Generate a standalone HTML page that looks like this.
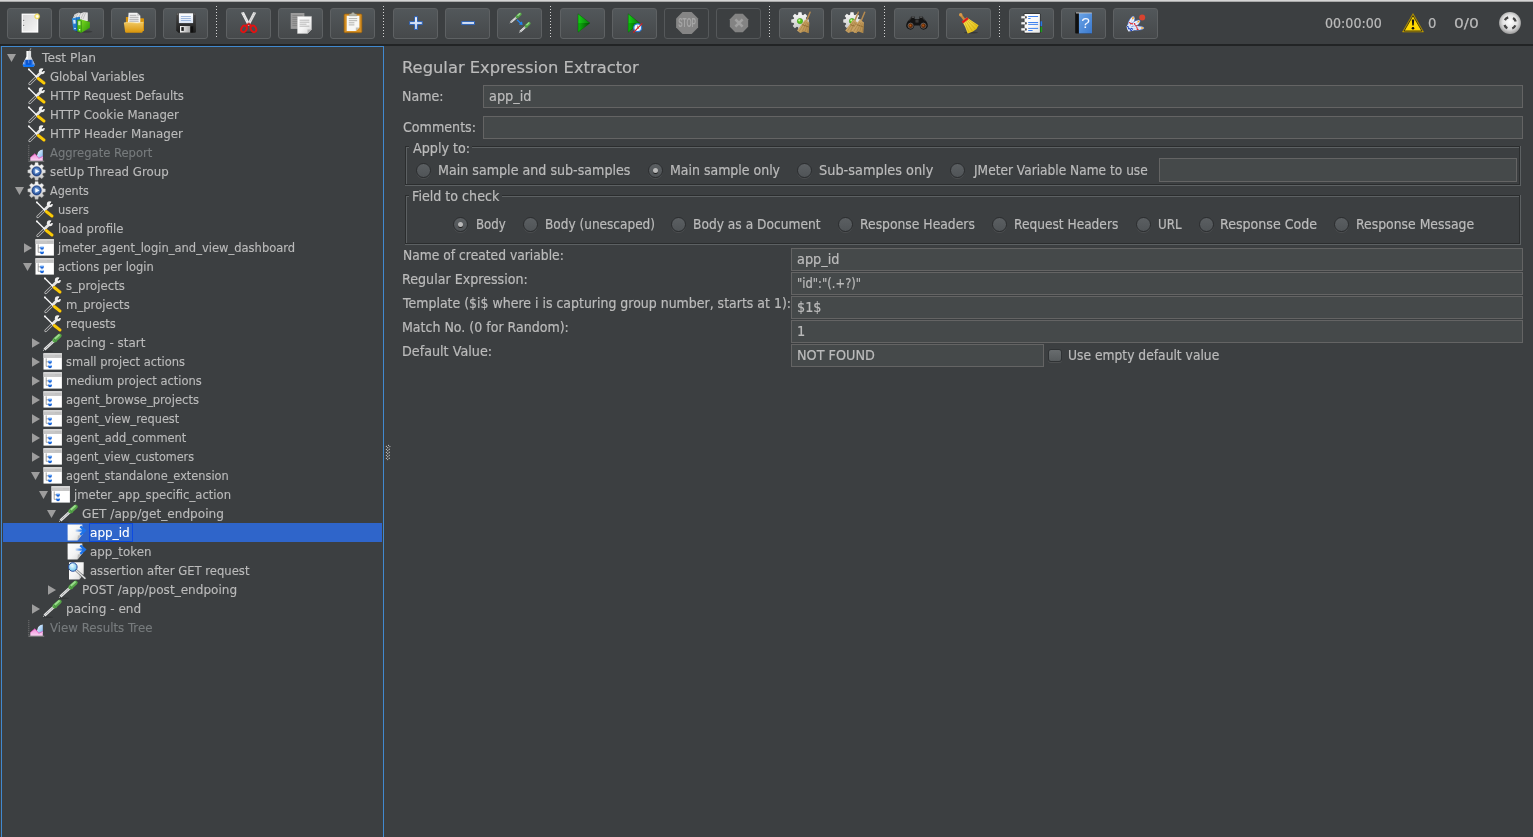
<!DOCTYPE html>
<html lang="en"><head><meta charset="utf-8"><title>Apache JMeter</title>
<style>
html,body{margin:0;padding:0;background:#3c3f41;overflow:hidden}
body{width:1533px;height:837px;position:relative;font-family:"DejaVu Sans","Liberation Sans",sans-serif;font-size:13.5px;color:#bbbbbb}
.a{position:absolute}
.t{-webkit-text-stroke:.2px;position:absolute;white-space:nowrap;line-height:16px;height:16px;transform-origin:0 50%;color:#bbbbbb}
.dis{color:#777b7d}
.sel{color:#ffffff}
.h{font-size:16.7px;line-height:20px;height:20px}
.tr{font-size:12.5px;-webkit-text-stroke:.14px}
.btn{position:absolute;top:8px;width:45px;height:31px;box-sizing:border-box;border:1px solid #5e6163;border-radius:3px;background:linear-gradient(#52575a,#46494b)}
.btn.off{background:#3c3f41;border-color:#55585a}
.btn svg{position:absolute;left:11px;top:3px;will-change:transform}
.sep{position:absolute;top:6px;width:1px;height:31px;background:repeating-linear-gradient(#d4d4d4 0,#d4d4d4 1px,transparent 1px,transparent 3px)}
.f{position:absolute;box-sizing:border-box;height:23px;background:#45494a;border:1px solid #646464}
.rb{position:absolute;width:15px;height:15px;box-sizing:border-box;border-radius:50%;background:linear-gradient(#5b5f62,#505457);border:1px solid #2b2d2f;box-shadow:0 1px 0 rgba(130,130,130,.22)}
.rb.on::after{content:"";position:absolute;left:4px;top:4px;width:5px;height:5px;border-radius:50%;background:#b9b9b9;box-shadow:0 1px 0 #1e1e1e}
.gb{position:absolute;box-sizing:border-box;border:1px solid #2b2d2e}
.gb::after{content:"";position:absolute;left:0;top:0;right:0;bottom:0;border-left:1px solid #5d6163;border-top:1px solid #5d6163}
.gb::before{content:"";position:absolute;left:-1px;top:-1px;right:-2px;bottom:-2px;border-right:1px solid #5d6163;border-bottom:1px solid #5d6163}
.gl{position:absolute;background:#3c3f41;height:14px}
svg{display:block;overflow:visible}
</style></head><body>

<svg width="0" height="0" style="position:absolute"><defs>
<linearGradient id="gPage" x1="0" y1="0" x2="1" y2="1"><stop offset="0" stop-color="#ffffff"/><stop offset=".55" stop-color="#f4f4f4"/><stop offset="1" stop-color="#d4d4d4"/></linearGradient>
<linearGradient id="gGear" x1="0" y1="0" x2="0" y2="1"><stop offset="0" stop-color="#fafafa"/><stop offset="1" stop-color="#c6c6c6"/></linearGradient>
<radialGradient id="gBlueBall" cx=".5" cy=".45" r=".55"><stop offset="0" stop-color="#a2c6ee"/><stop offset=".55" stop-color="#4a78bc"/><stop offset="1" stop-color="#173a80"/></radialGradient>
<linearGradient id="gLiquid" x1="0" y1="0" x2="0" y2="1"><stop offset="0" stop-color="#5aa2f2"/><stop offset=".45" stop-color="#1668e4"/><stop offset="1" stop-color="#0a4cc8"/></linearGradient>
<linearGradient id="gGlass" x1="0" y1="0" x2="1" y2="0"><stop offset="0" stop-color="#d4d7da"/><stop offset=".35" stop-color="#ffffff"/><stop offset=".55" stop-color="#e2e4e6"/><stop offset="1" stop-color="#c4c7ca"/></linearGradient>
<linearGradient id="gLiqH" x1="0" y1="0" x2="1" y2="0"><stop offset="0" stop-color="#b4ccf6"/><stop offset=".3" stop-color="#0c56d0"/><stop offset=".7" stop-color="#0c56d0"/><stop offset="1" stop-color="#a8c4f4"/></linearGradient>
<linearGradient id="gTail" x1="0" y1="0" x2="1" y2="0"><stop offset="0" stop-color="#1c72ea" stop-opacity=".12"/><stop offset=".6" stop-color="#1c72ea" stop-opacity=".85"/><stop offset="1" stop-color="#1c72ea"/></linearGradient>
<radialGradient id="gLens" cx=".45" cy=".4" r=".6"><stop offset="0" stop-color="#e8fbff"/><stop offset="1" stop-color="#6cc4ee"/></radialGradient>
<linearGradient id="gSky" x1="0" y1="0" x2="1" y2="1"><stop offset="0" stop-color="#f4faff"/><stop offset="1" stop-color="#7db6f0"/></linearGradient>
<linearGradient id="gPink" x1="0" y1="0" x2="0" y2="1"><stop offset="0" stop-color="#f08cd8"/><stop offset="1" stop-color="#fbd2f4"/></linearGradient>
<linearGradient id="gNode" x1="0" y1="0" x2="0" y2="1"><stop offset="0" stop-color="#8fc4ff"/><stop offset=".5" stop-color="#1f70e4"/><stop offset="1" stop-color="#0d4fc0"/></linearGradient>
<linearGradient id="gBtn" x1="0" y1="0" x2="0" y2="1"><stop offset="0" stop-color="#52575a"/><stop offset="1" stop-color="#45494b"/></linearGradient>
<linearGradient id="gGreenTri" x1="0" y1="0" x2="1" y2="0"><stop offset="0" stop-color="#16d016"/><stop offset="1" stop-color="#0a7a0a"/></linearGradient>
<linearGradient id="gGreenTriD" x1="0" y1="0" x2="1" y2="0"><stop offset="0" stop-color="#0cb80c"/><stop offset="1" stop-color="#064806"/></linearGradient>
<linearGradient id="gFolder" x1="0" y1="0" x2="0" y2="1"><stop offset="0" stop-color="#f0c862"/><stop offset="1" stop-color="#d99408"/></linearGradient>
<linearGradient id="gFloppy" x1="0" y1="0" x2="0" y2="1"><stop offset="0" stop-color="#4a4a4a"/><stop offset="1" stop-color="#1c1c1c"/></linearGradient>
<linearGradient id="gLabel" x1="0" y1="0" x2="0" y2="1"><stop offset="0" stop-color="#ffffff"/><stop offset="1" stop-color="#dbe6f6"/></linearGradient>
<linearGradient id="gMetal" x1="0" y1="0" x2="1" y2="0"><stop offset="0" stop-color="#f4f4f4"/><stop offset="1" stop-color="#a4a4a4"/></linearGradient>
<linearGradient id="gPlus" x1="0" y1="0" x2="0" y2="1"><stop offset="0" stop-color="#f4f8ff"/><stop offset="1" stop-color="#b4c8ea"/></linearGradient>
<linearGradient id="gNewPage" x1="0" y1="0" x2="1" y2="1"><stop offset="0" stop-color="#d8d8d8"/><stop offset="1" stop-color="#f6f6f6"/></linearGradient>
<radialGradient id="gSpark"><stop offset="0" stop-color="#ffffff"/><stop offset=".3" stop-color="#fffbe0"/><stop offset=".62" stop-color="#f2de5a" stop-opacity=".95"/><stop offset="1" stop-color="#e8c820" stop-opacity="0"/></radialGradient>
<radialGradient id="gRound" cx=".5" cy=".45" r=".55"><stop offset="0" stop-color="#ffffff"/><stop offset=".6" stop-color="#e2e2e2"/><stop offset="1" stop-color="#9a9a9a"/></radialGradient>
<linearGradient id="gGreenB" x1="0" y1="0" x2="1" y2="1"><stop offset="0" stop-color="#7ad820"/><stop offset="1" stop-color="#2a9408"/></linearGradient>
<linearGradient id="gBlueB" x1="0" y1="0" x2="1" y2="1"><stop offset="0" stop-color="#3a9ae8"/><stop offset="1" stop-color="#0a5cb4"/></linearGradient>
<linearGradient id="gBook" x1="0" y1="0" x2="1" y2="1"><stop offset="0" stop-color="#6aa4e8"/><stop offset="1" stop-color="#3a78cc"/></linearGradient>
<linearGradient id="gBroomY" x1="0" y1="0" x2="1" y2="1"><stop offset="0" stop-color="#fff06a"/><stop offset="1" stop-color="#d8b000"/></linearGradient>
<linearGradient id="gBroomT" x1="0" y1="0" x2="1" y2="1"><stop offset="0" stop-color="#dcb87c"/><stop offset="1" stop-color="#b08848"/></linearGradient>
<radialGradient id="gLensO" cx=".45" cy=".45" r=".6"><stop offset="0" stop-color="#b8621c"/><stop offset=".5" stop-color="#6a2c06"/><stop offset="1" stop-color="#200c00"/></radialGradient>
</defs></svg>
<div class="a" style="left:0;top:0;width:1533px;height:2px;background:linear-gradient(#d5d5d5 0,#d5d5d5 50%,#a9a9a9 50%,#a9a9a9 100%)"></div>
<div class="a" style="left:0;top:44px;width:1533px;height:2px;background:#222425"></div>
<div class="btn" style="left:7px"><svg width="22" height="22" viewBox="0 0 22 22"><rect x="2.6" y="1.6" width="16.7" height="19" fill="#ffffff"/><rect x="3.8" y="2.8" width="14.3" height="16.6" fill="url(#gNewPage)"/><circle cx="4.7" cy="8.4" r=".7" fill="#6a6a6a"/><circle cx="5.2" cy="9" r=".6" fill="#fff"/><circle cx="4.7" cy="13.4" r=".7" fill="#6a6a6a"/><circle cx="5.2" cy="14" r=".6" fill="#fff"/><circle cx="18.2" cy="4.4" r="3.4" fill="url(#gSpark)"/></svg></div>
<div class="btn" style="left:59px"><svg width="22" height="22" viewBox="0 0 22 22"><ellipse cx="13" cy="19.6" rx="8.5" ry="1.2" fill="#1c1c1c" opacity=".35"/><path d="M1.8 6.5L3.6 2.2L8 .4L9.2 1.6L12.6 .2L16.8 .6V9H6z" fill="#e6e6e6"/><path d="M3 5.2L5.4 1.6M4.8 5.4L7.4 1M7 6L9.6 1.8M10 6.5L12.6 .8M12 7L14.6 .8" stroke="#a8a8a8" stroke-width=".6" fill="none"/><path d="M.9 6.4L5.6 5.3L9 4.8V18L6 19.2L2.3 17.9z" fill="url(#gBlueB)"/><path d="M5.6 5.3L6 19.2" stroke="#0a4a98" stroke-width=".5"/><rect x="2.3" y="8" width="2.3" height="3.6" fill="#d4e6f8" transform="rotate(-6 3.4 9.8)"/><circle cx="4" cy="16.5" r=".8" fill="#e8f0ff"/><path d="M10.3 7.6L18.9 10.1V15.8L10.5 20.7z" fill="url(#gGreenB)"/><path d="M6.3 8L10.3 7.6L10.5 20.7L6.5 19.4z" fill="#4fbf10"/><path d="M6.3 8L10.3 7.6L10.5 20.7L6.5 19.4z" fill="none" stroke="#2a8a08" stroke-width=".4"/><rect x="7.2" y="9.2" width="2.2" height="4" fill="#c8f0a0"/><circle cx="8.6" cy="17.7" r=".8" fill="#f0fff0"/></svg></div>
<div class="btn" style="left:111px"><svg width="22" height="22" viewBox="0 0 22 22"><path d="M2.9 5H7.5L8.6 6.2H20.2Q21 6.2 21 7V19H2.9z" fill="#d8940c"/><path d="M5.6 .8H14.2L17.3 3.8V11H4.9z" fill="#f4f4f4"/><path d="M14.2 .8L17.3 3.8H14.2z" fill="#c4c4c4"/><path d="M6.8 3.3H13.4M6.6 5.3H15.6M6.4 7.3H15.6M6.2 9.2H15.6" stroke="#9c9c9c" stroke-width=".8"/><path d="M.9 10.9Q5 9.6 9.5 10.6T20.5 10.2L19.7 19.8Q19.6 20.8 18.6 20.8H3.2Q2.2 20.8 2.1 19.8z" fill="url(#gFolder)"/><path d="M.9 10.9Q5 9.6 9.5 10.6T20.5 10.2" stroke="#fbe49a" stroke-width=".6" fill="none"/></svg></div>
<div class="btn" style="left:163px"><svg width="22" height="22" viewBox="0 0 22 22"><path d="M2.2 .8H19.9Q20.9 .8 20.9 1.8V19.8Q20.9 20.8 19.9 20.8H3.4L1.2 18.6V1.8Q1.2 .8 2.2 .8z" fill="url(#gFloppy)"/><rect x="3.9" y="1.3" width="14.2" height="9.8" fill="url(#gLabel)"/><path d="M5.9 4.5H15.9M5.9 6.5H15.9M5.9 8.5H15.9" stroke="#8caad6" stroke-width=".8"/><rect x="5" y="14" width="10.2" height="6.6" fill="url(#gMetal)"/><rect x="6.3" y="15.1" width="2.5" height="3.8" fill="#1e1e1e"/><rect x="15.6" y="14.4" width="2.6" height="6" fill="#101010"/><circle cx="2.3" cy="2" r=".5" fill="#999"/><circle cx="19.8" cy="2" r=".5" fill="#999"/></svg></div>
<div class="btn" style="left:226px"><svg width="22" height="22" viewBox="0 0 22 22"><ellipse cx="10.8" cy="20.3" rx="5.5" ry=".7" fill="#1c1c1c" opacity=".4"/><path d="M3 .7L5.9 .1L12.3 12.4L9.9 13.8z" fill="#ececec"/><path d="M18.2 .7L15.3 .1L8.9 12.4L11.3 13.8z" fill="#e0e0e0"/><path d="M4.6 1.2L10.8 12.4M16.6 1.2L10.4 12.4" stroke="#a8a8a8" stroke-width=".6" stroke-dasharray="1 1"/><ellipse cx="6" cy="16.9" rx="2.6" ry="3.4" transform="rotate(32 6 16.9)" fill="none" stroke="#e21212" stroke-width="1.9"/><ellipse cx="15.4" cy="16.9" rx="2.6" ry="3.4" transform="rotate(-32 15.4 16.9)" fill="none" stroke="#e21212" stroke-width="1.9"/><path d="M8.2 13.8L10.7 11.6L13.2 13.8" stroke="#e21212" stroke-width="1.8" fill="none"/><circle cx="10.7" cy="11.6" r=".6" fill="#666"/></svg></div>
<div class="btn" style="left:278px"><svg width="22" height="22" viewBox="0 0 22 22"><rect x=".7" y="1" width="13.7" height="15.9" fill="#9b9b9b"/><path d="M2.4 3.6H12.6M2.4 5.6H12.6M2.4 7.6H12.6M2.4 9.6H12.6M2.4 11.6H7.4M2.4 13.6H7.4" stroke="#7e7e7e" stroke-width=".8"/><path d="M7.5 4.4H21.5V17.5L17.5 21.5H7.5z" fill="url(#gPage)" stroke="#d0d0d0" stroke-width=".4"/><path d="M21.5 17.5L17.5 21.5V17.5z" fill="#b4b4b4"/><path d="M9.6 8.2H19.4M9.6 10.2H19.4M9.6 12.2H16.5M9.6 14.2H19.4" stroke="#a8a8a8" stroke-width=".8"/></svg></div>
<div class="btn" style="left:330px"><svg width="22" height="22" viewBox="0 0 22 22"><rect x="2.1" y="2" width="17.8" height="18.7" rx="1.2" fill="#d48e22" stroke="#9a5e0c" stroke-width=".7"/><path d="M4.7 3.7H17.4V15.4L13.8 19H4.7z" fill="#f7f7f5"/><path d="M17.4 15.4L13.8 19V15.4z" fill="#c2c2ba"/><path d="M7.2 3.9V2.6Q7.2 1.9 8 1.9H9.2Q9.6 .5 11 .5T12.8 1.9H14Q14.8 1.9 14.8 2.6V3.9z" fill="#b4b4a6" stroke="#8c8c80" stroke-width=".4"/><path d="M6.8 6.6H15.2M6.8 8.7H15.2M6.8 10.8H12.4M6.8 12.9H12.4" stroke="#a0a09a" stroke-width=".8"/></svg></div>
<div class="btn" style="left:393px"><svg width="22" height="22" viewBox="0 0 22 22"><path d="M9.5 4.7H12.5V9.6H17.3V12.6H12.5V17.5H9.5V12.6H4.6V9.6H9.5z" fill="url(#gPlus)" stroke="#2c62b8" stroke-width="1" stroke-linejoin="round"/></svg></div>
<div class="btn" style="left:445px"><svg width="22" height="22" viewBox="0 0 22 22"><rect x="4.7" y="9.6" width="12.8" height="3" fill="url(#gPlus)" stroke="#2c62b8" stroke-width="1" stroke-linejoin="round"/></svg></div>
<div class="btn" style="left:497px"><svg width="22" height="22" viewBox="0 0 22 22"><path d="M1.00 10.90L1.87 10.15" stroke="#d0d0d0" stroke-width="0.65" stroke-linecap="round"/><path d="M1.87 10.15L7.84 5.02" stroke="#e9e9e9" stroke-width="1.94"/><path d="M1.87 10.15L7.84 5.02" stroke="#808488" stroke-width="0.72" stroke-dasharray="1.1 .7"/><path d="M8.07 4.82L11.20 2.13" stroke="#56a448" stroke-width="3.02" stroke-linecap="round"/><path d="M8.10 3.94L10.78 1.64" stroke="#9adc8c" stroke-width="1.37" stroke-linecap="round"/><path d="M8.07 4.82L8.78 4.21" stroke="#4a9640" stroke-width="3.60"/><path d="M10.20 20.60L11.05 19.82" stroke="#d0d0d0" stroke-width="0.65" stroke-linecap="round"/><path d="M11.05 19.82L16.86 14.48" stroke="#e9e9e9" stroke-width="1.94"/><path d="M11.05 19.82L16.86 14.48" stroke="#808488" stroke-width="0.72" stroke-dasharray="1.1 .7"/><path d="M17.08 14.28L20.13 11.47" stroke="#56a448" stroke-width="3.02" stroke-linecap="round"/><path d="M17.09 13.39L19.70 10.99" stroke="#9adc8c" stroke-width="1.37" stroke-linecap="round"/><path d="M17.08 14.28L17.77 13.64" stroke="#4a9640" stroke-width="3.60"/><path d="M8 7.8L12.2 11.8" stroke="#1f86f4" stroke-width="1.2"/><path d="M13.6 13.1L9.9 12.5L13 9.3z" fill="#1f86f4"/></svg></div>
<div class="btn" style="left:560px"><svg width="22" height="22" viewBox="0 0 22 22"><path d="M6 1.8L17.9 11L6 20.2z" fill="url(#gGreenTri)"/><path d="M6 11H17.9L6 20.2z" fill="url(#gGreenTriD)"/><path d="M6 1.8L17.9 11L6 20.2z" fill="none" stroke="#0a5a0a" stroke-width=".5"/></svg></div>
<div class="btn" style="left:612px"><svg width="22" height="22" viewBox="0 0 22 22"><path d="M4.2 1.8L15.6 11L4.2 20.2z" fill="url(#gGreenTri)"/><path d="M4.2 11H15.6L4.2 20.2z" fill="url(#gGreenTriD)"/><path d="M4.2 1.8L15.6 11L4.2 20.2z" fill="none" stroke="#0a5a0a" stroke-width=".5"/><circle cx="13.7" cy="15.7" r="3.9" fill="#f8fbff" stroke="#2a7ad6" stroke-width="1.3"/><path d="M13.7 13.6V15.7L15.2 16.6" stroke="#555" stroke-width=".7" fill="none"/><path d="M9.3 20.6L18.3 11.3" stroke="#e01818" stroke-width="1.1"/></svg></div>
<div class="btn off" style="left:664px"><svg width="22" height="22" viewBox="0 0 22 22"><path d="M22.09 15.55L15.65 21.99L6.55 21.99L0.11 15.55L0.11 6.45L6.55 0.01L15.65 0.01L22.09 6.45z" fill="#858585"/><text x="11.1" y="15.4" text-anchor="middle" font-family="Liberation Sans,sans-serif" font-weight="bold" font-size="12.2" fill="#a6a6a6" textLength="17.8" lengthAdjust="spacingAndGlyphs">STOP</text></svg></div>
<div class="btn off" style="left:716px"><svg width="22" height="22" viewBox="0 0 22 22"><path d="M20.15 14.79L14.79 20.15L7.21 20.15L1.85 14.79L1.85 7.21L7.21 1.85L14.79 1.85L20.15 7.21z" fill="#838383"/><path d="M7.4 7.4L14.6 14.6M14.6 7.4L7.4 14.6" stroke="#a0a0a0" stroke-width="2.6"/></svg></div>
<div class="btn" style="left:779px"><svg width="22" height="22" viewBox="0 0 22 22"><path d="M7.07 2.69L7.45 0.24L10.55 0.24L10.93 2.69L12.10 3.17L14.10 1.71L16.29 3.90L14.83 5.90L15.31 7.07L17.76 7.45L17.76 10.55L15.31 10.93L14.83 12.10L16.29 14.10L14.10 16.29L12.10 14.83L10.93 15.31L10.55 17.76L7.45 17.76L7.07 15.31L5.90 14.83L3.90 16.29L1.71 14.10L3.17 12.10L2.69 10.93L0.24 10.55L0.24 7.45L2.69 7.07L3.17 5.90L1.71 3.90L3.90 1.71L5.90 3.17z" fill="url(#gGear)"/><circle cx="9" cy="9.1" r="2.7" fill="#58c21c" stroke="#2e8a0c" stroke-width=".5"/><circle cx="8.3" cy="8.3" r="1.1" fill="#c4f49c"/><g transform="translate(0.0 0)"><path d="M19.1 .3L14.9 10.4" stroke="#b48a50" stroke-width="1.5" stroke-linecap="round"/><path d="M14.2 7.4L18.4 10.4L17.7 21.2L13 19.6L9.2 20.9L6 18.5z" fill="url(#gBroomT)"/><path d="M14.4 9.5L8 19.4M15.6 10.2L11 20M16.8 10.8L14 19.8M17.6 11.6L16.6 20.6" stroke="#9a7438" stroke-width=".5"/><path d="M11 12.6L17.9 15" stroke="#8a6428" stroke-width=".7"/></g></svg></div>
<div class="btn" style="left:831px"><svg width="22" height="22" viewBox="0 0 22 22"><path d="M7.07 2.69L7.45 0.24L10.55 0.24L10.93 2.69L12.10 3.17L14.10 1.71L16.29 3.90L14.83 5.90L15.31 7.07L17.76 7.45L17.76 10.55L15.31 10.93L14.83 12.10L16.29 14.10L14.10 16.29L12.10 14.83L10.93 15.31L10.55 17.76L7.45 17.76L7.07 15.31L5.90 14.83L3.90 16.29L1.71 14.10L3.17 12.10L2.69 10.93L0.24 10.55L0.24 7.45L2.69 7.07L3.17 5.90L1.71 3.90L3.90 1.71L5.90 3.17z" fill="url(#gGear)"/><circle cx="9" cy="9.1" r="2.7" fill="#58c21c" stroke="#2e8a0c" stroke-width=".5"/><circle cx="8.3" cy="8.3" r="1.1" fill="#c4f49c"/><g transform="translate(-3.8 0)"><path d="M19.1 .3L14.9 10.4" stroke="#b48a50" stroke-width="1.5" stroke-linecap="round"/><path d="M14.2 7.4L18.4 10.4L17.7 21.2L13 19.6L9.2 20.9L6 18.5z" fill="url(#gBroomT)"/><path d="M14.4 9.5L8 19.4M15.6 10.2L11 20M16.8 10.8L14 19.8M17.6 11.6L16.6 20.6" stroke="#9a7438" stroke-width=".5"/><path d="M11 12.6L17.9 15" stroke="#8a6428" stroke-width=".7"/></g><g transform="translate(2.6 0)"><path d="M19.1 .3L14.9 10.4" stroke="#b48a50" stroke-width="1.5" stroke-linecap="round"/><path d="M14.2 7.4L18.4 10.4L17.7 21.2L13 19.6L9.2 20.9L6 18.5z" fill="url(#gBroomT)"/><path d="M14.4 9.5L8 19.4M15.6 10.2L11 20M16.8 10.8L14 19.8M17.6 11.6L16.6 20.6" stroke="#9a7438" stroke-width=".5"/><path d="M11 12.6L17.9 15" stroke="#8a6428" stroke-width=".7"/></g></svg></div>
<div class="btn" style="left:894px"><svg width="22" height="22" viewBox="0 0 22 22"><path d="M5.6 4.6H8.6V7H13.4V4.6H16.4L20.6 9.8Q22.4 12.6 21.6 15T17.6 17.7Q14.2 17.4 13.6 13.6H8.4Q7.8 17.4 4.4 17.7Q1.2 17.4 .4 15T1.4 9.8z" fill="#141414"/><path d="M6 5.2H8.2M13.8 5.2H16" stroke="#8a8a8a" stroke-width=".7"/><path d="M9.4 7.6H12.6V10.6H9.4z" fill="#3a3a3a"/><circle cx="4.6" cy="13.7" r="2.6" fill="url(#gLensO)" stroke="#8a8a8a" stroke-width=".6"/><circle cx="17.4" cy="13.7" r="2.6" fill="url(#gLensO)" stroke="#8a8a8a" stroke-width=".6"/><path d="M3 8.6L5.6 5.4M19 8.6L16.4 5.4" stroke="#5a5a5a" stroke-width=".6"/></svg></div>
<div class="btn" style="left:946px"><svg width="22" height="22" viewBox="0 0 22 22"><ellipse cx="13" cy="20.6" rx="7" ry="1" fill="#1c1c1c" opacity=".4"/><path d="M2.6 2.6L6.6 8" stroke="#c88a3c" stroke-width="2.3" stroke-linecap="round"/><circle cx="2.7" cy="2.7" r="1.7" fill="#d89a48"/><path d="M4.2 9.2L8.8 5.6L20.6 13.2Q19 17.6 15 19.6T9.6 21.4Q7.6 15 4.2 9.2z" fill="url(#gBroomY)"/><path d="M6.6 10L11.2 20.6M8 9L14.6 19.6M9 8L17.6 17.4M9.6 7L19.8 14.6" stroke="#c49a00" stroke-width=".5"/><path d="M3.7 9.6L9.2 5.2L10.6 6.9L5 11.6z" fill="#e01a1a"/></svg></div>
<div class="btn" style="left:1009px"><svg width="22" height="22" viewBox="0 0 22 22"><rect x="19" y="9.3" width="2.1" height="4.8" fill="#2a78e4"/><rect x="19" y="14.9" width="2.1" height="5.2" fill="#1c9a1c"/><rect x="2.8" y="1.4" width="16.6" height="19.9" rx=".8" fill="#1a1a1a"/><rect x="3.6" y="2" width="15.2" height="18.6" fill="#ffffff"/><rect x="3.6" y="2" width="15.2" height="18.6" fill="url(#gPage)" opacity=".6"/><path d="M7.2 4.5H17.1M7.2 6.5H9.6M7.2 10.5H17.1M7.2 12.4H17.1M7.2 16.4H17.1M7.2 18.5H11.6" stroke="#2a74ec" stroke-width=".9"/><rect x=".1" y="4" width="4.4" height="2.6" rx=".6" fill="#f2f2f2" stroke="#666" stroke-width=".4"/><rect x=".1" y="10" width="4.4" height="2.6" rx=".6" fill="#f2f2f2" stroke="#666" stroke-width=".4"/><rect x=".1" y="16.1" width="4.4" height="2.6" rx=".6" fill="#f2f2f2" stroke="#666" stroke-width=".4"/><rect x="4.4" y="4.3" width="1.2" height="2" fill="#111"/><rect x="4.4" y="10.3" width="1.2" height="2" fill="#111"/><rect x="4.4" y="16.4" width="1.2" height="2" fill="#111"/></svg></div>
<div class="btn" style="left:1061px"><svg width="22" height="22" viewBox="0 0 22 22"><rect x="2.2" y=".3" width="16.8" height="21.2" rx=".8" fill="#101010"/><rect x="5.9" y="1.1" width="13.1" height="20.4" fill="url(#gBook)"/><path d="M3 .9H18.8" stroke="#e8e8e8" stroke-width=".9"/><text x="12.6" y="16.4" text-anchor="middle" font-family="Liberation Sans,sans-serif" font-size="15.5" fill="#f4f8ff">?</text></svg></div>
<div class="btn" style="left:1113px"><svg width="22" height="22" viewBox="0 0 22 22"><g transform="rotate(-68.0 3.80 16.40)"><ellipse cx="10.30" cy="16.40" rx="6.50" ry="2.70" fill="#f0f4fc" stroke="#3f6ad0" stroke-width=".8" stroke-dasharray=".9 .5"/><path d="M4.80 16.40H14.40" stroke="#5a84dc" stroke-width=".5" stroke-dasharray=".7 .6"/><ellipse cx="14.90" cy="16.40" rx="1.3" ry=".75" fill="#f6a21c"/></g><g transform="rotate(-36.0 4.30 16.20)"><ellipse cx="10.90" cy="16.20" rx="6.60" ry="2.50" fill="#f0f4fc" stroke="#3f6ad0" stroke-width=".8" stroke-dasharray=".9 .5"/><path d="M5.30 16.20H15.10" stroke="#5a84dc" stroke-width=".5" stroke-dasharray=".7 .6"/><ellipse cx="15.60" cy="16.20" rx="1.3" ry=".75" fill="#f6a21c"/></g><g transform="rotate(-2.0 4.30 16.40)"><ellipse cx="11.70" cy="16.40" rx="7.40" ry="2.20" fill="#f0f4fc" stroke="#3f6ad0" stroke-width=".8" stroke-dasharray=".9 .5"/><path d="M5.30 16.40H16.70" stroke="#5a84dc" stroke-width=".5" stroke-dasharray=".7 .6"/><ellipse cx="17.20" cy="16.40" rx="1.3" ry=".75" fill="#f6a21c"/></g><path d="M1.6 14.4Q1.8 17.6 3.4 19.4L8.6 18.8L6 14.2L3 12.6z" fill="#dfe8fa"/><path d="M2.4 14.6l1.2.6M3.4 16.6l2.4.4M5.2 18l1.6.8M6.6 16.4l1 .8" stroke="#1c44c0" stroke-width="1.1" stroke-linecap="round"/><path d="M4.6 10.6l.9.8M6.6 11.6l1 .3M9.4 11.6l.5 1M10.8 13.6l.8.4M11.8 15.6l.4.5M12.2 17.4l.9.1" stroke="#e0282c" stroke-width="1.2" stroke-linecap="round"/><circle cx="17.2" cy="5.5" r="3" fill="#d8432f"/></svg></div>
<div class="sep" style="left:216px"></div>
<div class="sep" style="left:383px"></div>
<div class="sep" style="left:550px"></div>
<div class="sep" style="left:769px"></div>
<div class="sep" style="left:884px"></div>
<div class="sep" style="left:999px"></div>
<div class="a" style="left:1402px;top:12.6px"><svg width="22" height="20" viewBox="0 0 22 20"><path d="M11 .6L21.6 19H.4z" fill="#c8a200" stroke="#a88a00" stroke-width=".6" stroke-linejoin="round"/><path d="M11 2.6L19.9 18H2.1z" fill="#ffd800" stroke="#1a1a1a" stroke-width=".8" stroke-linejoin="round"/><path d="M9.8 6.6H12.2L11.7 12.6H10.3z" fill="#111"/><circle cx="11" cy="15.3" r="1.3" fill="#111"/></svg></div>
<div class="a" style="left:1499px;top:12px"><svg width="22" height="22" viewBox="0 0 22 22"><circle cx="11" cy="11" r="10.9" fill="url(#gRound)"/><circle cx="11" cy="11" r="5.9" fill="none" stroke="#444" stroke-width="2.3" stroke-dasharray="4.2 5.07" stroke-dashoffset="-2.5"/></svg></div>
<div class="a" style="left:1px;top:46px;width:383px;height:800px;box-sizing:border-box;border:1px solid #4189cf;border-bottom:none"></div>
<svg class="a" style="left:7px;top:54px" width="9" height="8" viewBox="0 0 9 8"><path d="M0 0H9L4.5 8z" fill="#9d9d9d"/></svg>
<div class="a" style="left:20px;top:48.0px;width:18px;height:18px"><svg width="18" height="19" viewBox="0 0 18 19"><path d="M10.9 .1L9.7 3.1" stroke="#a4a4a4" stroke-width=".9"/><path d="M6.4 3H11.1V8.5L14.3 15.6Q15 18.8 12 19H5.3Q2.3 18.8 3 15.6L6.4 8.5z" fill="url(#gGlass)"/><path d="M4.9 11.7H12.5L14.3 15.6Q15 18.8 12 19H5.3Q2.3 18.8 3 15.6z" fill="url(#gLiqH)"/><path d="M2.9 16.3Q8.7 17.6 14.4 16.3Q14.9 18.8 12 19H5.3Q2.4 18.8 2.9 16.3z" fill="#0a74fa"/><path d="M8.7 11.8V15.2" stroke="#8fb8f4" stroke-width=".7" opacity=".8"/><path d="M8.7 3.4V11.4" stroke="#c9cdd2" stroke-width=".6"/></svg></div>
<div class="a" style="left:28px;top:67.5px;width:18px;height:18px"><svg width="18" height="18" viewBox="0 0 18 18"><path d="M8.4 9.2L1.7 15.7" stroke="#b9b9b9" stroke-width="2.7" stroke-linecap="round"/><path d="M12.2 5.2L8 9.5" stroke="#e4e4e4" stroke-width="2.8"/><path d="M7.8 9.9L2.1 15.4" stroke="#35383a" stroke-width="1.2" stroke-linecap="round"/><circle cx="1.9" cy="15.6" r=".55" fill="#35383a"/><circle cx="13.8" cy="3.3" r="2.95" fill="#efefef"/><path d="M14.5 3.1L18 3L16 -.7z" fill="#3c3f41"/><path d="M14.3 3.2l1.6-1.2" stroke="#2c2e30" stroke-width="1.1" stroke-linecap="round"/><path d="M.8 1.3L9.4 9.7" stroke="#f4f4f4" stroke-width="1.4" stroke-linecap="round"/><circle cx=".9" cy="1.4" r=".95" fill="#f4f4f4"/><path d="M10.3 10.6L16 15.1" stroke="#dc9c00" stroke-width="3.2" stroke-linecap="round"/><path d="M10.3 10.6L16 15.1" stroke="#fcd80c" stroke-width="2.1" stroke-linecap="round"/><path d="M11.2 11.3L15.6 14.8" stroke="#eeb400" stroke-width="2.1" stroke-dasharray=".5 1.1"/></svg></div>
<div class="a" style="left:28px;top:86.5px;width:18px;height:18px"><svg width="18" height="18" viewBox="0 0 18 18"><path d="M8.4 9.2L1.7 15.7" stroke="#b9b9b9" stroke-width="2.7" stroke-linecap="round"/><path d="M12.2 5.2L8 9.5" stroke="#e4e4e4" stroke-width="2.8"/><path d="M7.8 9.9L2.1 15.4" stroke="#35383a" stroke-width="1.2" stroke-linecap="round"/><circle cx="1.9" cy="15.6" r=".55" fill="#35383a"/><circle cx="13.8" cy="3.3" r="2.95" fill="#efefef"/><path d="M14.5 3.1L18 3L16 -.7z" fill="#3c3f41"/><path d="M14.3 3.2l1.6-1.2" stroke="#2c2e30" stroke-width="1.1" stroke-linecap="round"/><path d="M.8 1.3L9.4 9.7" stroke="#f4f4f4" stroke-width="1.4" stroke-linecap="round"/><circle cx=".9" cy="1.4" r=".95" fill="#f4f4f4"/><path d="M10.3 10.6L16 15.1" stroke="#dc9c00" stroke-width="3.2" stroke-linecap="round"/><path d="M10.3 10.6L16 15.1" stroke="#fcd80c" stroke-width="2.1" stroke-linecap="round"/><path d="M11.2 11.3L15.6 14.8" stroke="#eeb400" stroke-width="2.1" stroke-dasharray=".5 1.1"/></svg></div>
<div class="a" style="left:28px;top:105.5px;width:18px;height:18px"><svg width="18" height="18" viewBox="0 0 18 18"><path d="M8.4 9.2L1.7 15.7" stroke="#b9b9b9" stroke-width="2.7" stroke-linecap="round"/><path d="M12.2 5.2L8 9.5" stroke="#e4e4e4" stroke-width="2.8"/><path d="M7.8 9.9L2.1 15.4" stroke="#35383a" stroke-width="1.2" stroke-linecap="round"/><circle cx="1.9" cy="15.6" r=".55" fill="#35383a"/><circle cx="13.8" cy="3.3" r="2.95" fill="#efefef"/><path d="M14.5 3.1L18 3L16 -.7z" fill="#3c3f41"/><path d="M14.3 3.2l1.6-1.2" stroke="#2c2e30" stroke-width="1.1" stroke-linecap="round"/><path d="M.8 1.3L9.4 9.7" stroke="#f4f4f4" stroke-width="1.4" stroke-linecap="round"/><circle cx=".9" cy="1.4" r=".95" fill="#f4f4f4"/><path d="M10.3 10.6L16 15.1" stroke="#dc9c00" stroke-width="3.2" stroke-linecap="round"/><path d="M10.3 10.6L16 15.1" stroke="#fcd80c" stroke-width="2.1" stroke-linecap="round"/><path d="M11.2 11.3L15.6 14.8" stroke="#eeb400" stroke-width="2.1" stroke-dasharray=".5 1.1"/></svg></div>
<div class="a" style="left:28px;top:124.5px;width:18px;height:18px"><svg width="18" height="18" viewBox="0 0 18 18"><path d="M8.4 9.2L1.7 15.7" stroke="#b9b9b9" stroke-width="2.7" stroke-linecap="round"/><path d="M12.2 5.2L8 9.5" stroke="#e4e4e4" stroke-width="2.8"/><path d="M7.8 9.9L2.1 15.4" stroke="#35383a" stroke-width="1.2" stroke-linecap="round"/><circle cx="1.9" cy="15.6" r=".55" fill="#35383a"/><circle cx="13.8" cy="3.3" r="2.95" fill="#efefef"/><path d="M14.5 3.1L18 3L16 -.7z" fill="#3c3f41"/><path d="M14.3 3.2l1.6-1.2" stroke="#2c2e30" stroke-width="1.1" stroke-linecap="round"/><path d="M.8 1.3L9.4 9.7" stroke="#f4f4f4" stroke-width="1.4" stroke-linecap="round"/><circle cx=".9" cy="1.4" r=".95" fill="#f4f4f4"/><path d="M10.3 10.6L16 15.1" stroke="#dc9c00" stroke-width="3.2" stroke-linecap="round"/><path d="M10.3 10.6L16 15.1" stroke="#fcd80c" stroke-width="2.1" stroke-linecap="round"/><path d="M11.2 11.3L15.6 14.8" stroke="#eeb400" stroke-width="2.1" stroke-dasharray=".5 1.1"/></svg></div>
<div class="a" style="left:28px;top:143.5px;width:18px;height:18px"><svg width="18" height="18" viewBox="0 0 18 18"><path d="M.8 1.2V17.2" stroke="#8c8c8c" stroke-width=".8" stroke-dasharray="1 1"/><path d="M.4 17.2H16.2" stroke="#9a9a9a" stroke-width=".8"/><path d="M8.6 12.5L10.2 8Q11.8 5.4 14.8 5.4V14H8.6z" fill="url(#gSky)"/><path d="M2.3 16.8V13.6L6.9 9.7L10.8 14.2L14.8 12.4V16.8z" fill="url(#gPink)"/><path d="M2.3 13.6L6.9 9.7L10.8 14.2L14.8 12.4" fill="none" stroke="#e050b8" stroke-width=".7"/></svg></div>
<div class="a" style="left:28px;top:162.5px;width:18px;height:18px"><svg width="18" height="18" viewBox="0 0 18 18"><g transform="translate(-.4 -.6)"><path d="M7.15 2.56L7.53 0.22L10.47 0.22L10.85 2.56L12.25 3.14L14.17 1.75L16.25 3.83L14.86 5.75L15.44 7.15L17.78 7.53L17.78 10.47L15.44 10.85L14.86 12.25L16.25 14.17L14.17 16.25L12.25 14.86L10.85 15.44L10.47 17.78L7.53 17.78L7.15 15.44L5.75 14.86L3.83 16.25L1.75 14.17L3.14 12.25L2.56 10.85L0.22 10.47L0.22 7.53L2.56 7.15L3.14 5.75L1.75 3.83L3.83 1.75L5.75 3.14z" fill="url(#gGear)" stroke="#a8a8a8" stroke-width=".35"/><circle cx="9" cy="9" r="4.7" fill="url(#gBlueBall)" stroke="#0c2a6e" stroke-width=".5"/><path d="M7.7 6.7V11.3L11.9 9z" fill="#f4f8ff"/></g></svg></div>
<svg class="a" style="left:15px;top:187px" width="9" height="8" viewBox="0 0 9 8"><path d="M0 0H9L4.5 8z" fill="#9d9d9d"/></svg>
<div class="a" style="left:28px;top:181.5px;width:18px;height:18px"><svg width="18" height="18" viewBox="0 0 18 18"><g transform="translate(-.4 -.6)"><path d="M7.15 2.56L7.53 0.22L10.47 0.22L10.85 2.56L12.25 3.14L14.17 1.75L16.25 3.83L14.86 5.75L15.44 7.15L17.78 7.53L17.78 10.47L15.44 10.85L14.86 12.25L16.25 14.17L14.17 16.25L12.25 14.86L10.85 15.44L10.47 17.78L7.53 17.78L7.15 15.44L5.75 14.86L3.83 16.25L1.75 14.17L3.14 12.25L2.56 10.85L0.22 10.47L0.22 7.53L2.56 7.15L3.14 5.75L1.75 3.83L3.83 1.75L5.75 3.14z" fill="url(#gGear)" stroke="#a8a8a8" stroke-width=".35"/><circle cx="9" cy="9" r="4.7" fill="url(#gBlueBall)" stroke="#0c2a6e" stroke-width=".5"/><path d="M7.7 6.7V11.3L11.9 9z" fill="#f4f8ff"/></g></svg></div>
<div class="a" style="left:36px;top:200.5px;width:18px;height:18px"><svg width="18" height="18" viewBox="0 0 18 18"><path d="M8.4 9.2L1.7 15.7" stroke="#b9b9b9" stroke-width="2.7" stroke-linecap="round"/><path d="M12.2 5.2L8 9.5" stroke="#e4e4e4" stroke-width="2.8"/><path d="M7.8 9.9L2.1 15.4" stroke="#35383a" stroke-width="1.2" stroke-linecap="round"/><circle cx="1.9" cy="15.6" r=".55" fill="#35383a"/><circle cx="13.8" cy="3.3" r="2.95" fill="#efefef"/><path d="M14.5 3.1L18 3L16 -.7z" fill="#3c3f41"/><path d="M14.3 3.2l1.6-1.2" stroke="#2c2e30" stroke-width="1.1" stroke-linecap="round"/><path d="M.8 1.3L9.4 9.7" stroke="#f4f4f4" stroke-width="1.4" stroke-linecap="round"/><circle cx=".9" cy="1.4" r=".95" fill="#f4f4f4"/><path d="M10.3 10.6L16 15.1" stroke="#dc9c00" stroke-width="3.2" stroke-linecap="round"/><path d="M10.3 10.6L16 15.1" stroke="#fcd80c" stroke-width="2.1" stroke-linecap="round"/><path d="M11.2 11.3L15.6 14.8" stroke="#eeb400" stroke-width="2.1" stroke-dasharray=".5 1.1"/></svg></div>
<div class="a" style="left:36px;top:219.5px;width:18px;height:18px"><svg width="18" height="18" viewBox="0 0 18 18"><path d="M8.4 9.2L1.7 15.7" stroke="#b9b9b9" stroke-width="2.7" stroke-linecap="round"/><path d="M12.2 5.2L8 9.5" stroke="#e4e4e4" stroke-width="2.8"/><path d="M7.8 9.9L2.1 15.4" stroke="#35383a" stroke-width="1.2" stroke-linecap="round"/><circle cx="1.9" cy="15.6" r=".55" fill="#35383a"/><circle cx="13.8" cy="3.3" r="2.95" fill="#efefef"/><path d="M14.5 3.1L18 3L16 -.7z" fill="#3c3f41"/><path d="M14.3 3.2l1.6-1.2" stroke="#2c2e30" stroke-width="1.1" stroke-linecap="round"/><path d="M.8 1.3L9.4 9.7" stroke="#f4f4f4" stroke-width="1.4" stroke-linecap="round"/><circle cx=".9" cy="1.4" r=".95" fill="#f4f4f4"/><path d="M10.3 10.6L16 15.1" stroke="#dc9c00" stroke-width="3.2" stroke-linecap="round"/><path d="M10.3 10.6L16 15.1" stroke="#fcd80c" stroke-width="2.1" stroke-linecap="round"/><path d="M11.2 11.3L15.6 14.8" stroke="#eeb400" stroke-width="2.1" stroke-dasharray=".5 1.1"/></svg></div>
<svg class="a" style="left:24px;top:243px" width="8" height="10" viewBox="0 0 8 10"><path d="M0 .3V9.7L8 5z" fill="#9d9d9d"/></svg>
<div class="a" style="left:36px;top:238.5px;width:18px;height:18px"><svg width="18" height="18" viewBox="0 0 18 18"><rect x="-.5" y=".4" width="18.4" height="16.2" fill="#ffffff"/><rect x="-.5" y=".4" width="18.4" height="4.6" fill="#c6c6c6"/><rect x="-.5" y=".4" width="18.4" height="1" fill="#e4e4e4"/><path d="M11.5 2.8h5" stroke="#b4b4b4" stroke-width="1" stroke-dasharray="1 1"/><path d="M2.2 5.4V13.3M2.2 8.8H4.2M2.2 13.3H4.2" stroke="#8c8c8c" stroke-width=".8" fill="none"/><circle cx="6" cy="8.8" r="1.9" fill="url(#gNode)"/><circle cx="6" cy="13.3" r="1.9" fill="url(#gNode)"/><ellipse cx="6" cy="7.7" rx="1.3" ry=".7" fill="#d6eaff" opacity=".85"/><ellipse cx="6" cy="12.2" rx="1.3" ry=".7" fill="#d6eaff" opacity=".85"/></svg></div>
<svg class="a" style="left:23px;top:263px" width="9" height="8" viewBox="0 0 9 8"><path d="M0 0H9L4.5 8z" fill="#9d9d9d"/></svg>
<div class="a" style="left:36px;top:257.5px;width:18px;height:18px"><svg width="18" height="18" viewBox="0 0 18 18"><rect x="-.5" y=".4" width="18.4" height="16.2" fill="#ffffff"/><rect x="-.5" y=".4" width="18.4" height="4.6" fill="#c6c6c6"/><rect x="-.5" y=".4" width="18.4" height="1" fill="#e4e4e4"/><path d="M11.5 2.8h5" stroke="#b4b4b4" stroke-width="1" stroke-dasharray="1 1"/><path d="M2.2 5.4V13.3M2.2 8.8H4.2M2.2 13.3H4.2" stroke="#8c8c8c" stroke-width=".8" fill="none"/><circle cx="6" cy="8.8" r="1.9" fill="url(#gNode)"/><circle cx="6" cy="13.3" r="1.9" fill="url(#gNode)"/><ellipse cx="6" cy="7.7" rx="1.3" ry=".7" fill="#d6eaff" opacity=".85"/><ellipse cx="6" cy="12.2" rx="1.3" ry=".7" fill="#d6eaff" opacity=".85"/></svg></div>
<div class="a" style="left:44px;top:276.5px;width:18px;height:18px"><svg width="18" height="18" viewBox="0 0 18 18"><path d="M8.4 9.2L1.7 15.7" stroke="#b9b9b9" stroke-width="2.7" stroke-linecap="round"/><path d="M12.2 5.2L8 9.5" stroke="#e4e4e4" stroke-width="2.8"/><path d="M7.8 9.9L2.1 15.4" stroke="#35383a" stroke-width="1.2" stroke-linecap="round"/><circle cx="1.9" cy="15.6" r=".55" fill="#35383a"/><circle cx="13.8" cy="3.3" r="2.95" fill="#efefef"/><path d="M14.5 3.1L18 3L16 -.7z" fill="#3c3f41"/><path d="M14.3 3.2l1.6-1.2" stroke="#2c2e30" stroke-width="1.1" stroke-linecap="round"/><path d="M.8 1.3L9.4 9.7" stroke="#f4f4f4" stroke-width="1.4" stroke-linecap="round"/><circle cx=".9" cy="1.4" r=".95" fill="#f4f4f4"/><path d="M10.3 10.6L16 15.1" stroke="#dc9c00" stroke-width="3.2" stroke-linecap="round"/><path d="M10.3 10.6L16 15.1" stroke="#fcd80c" stroke-width="2.1" stroke-linecap="round"/><path d="M11.2 11.3L15.6 14.8" stroke="#eeb400" stroke-width="2.1" stroke-dasharray=".5 1.1"/></svg></div>
<div class="a" style="left:44px;top:295.5px;width:18px;height:18px"><svg width="18" height="18" viewBox="0 0 18 18"><path d="M8.4 9.2L1.7 15.7" stroke="#b9b9b9" stroke-width="2.7" stroke-linecap="round"/><path d="M12.2 5.2L8 9.5" stroke="#e4e4e4" stroke-width="2.8"/><path d="M7.8 9.9L2.1 15.4" stroke="#35383a" stroke-width="1.2" stroke-linecap="round"/><circle cx="1.9" cy="15.6" r=".55" fill="#35383a"/><circle cx="13.8" cy="3.3" r="2.95" fill="#efefef"/><path d="M14.5 3.1L18 3L16 -.7z" fill="#3c3f41"/><path d="M14.3 3.2l1.6-1.2" stroke="#2c2e30" stroke-width="1.1" stroke-linecap="round"/><path d="M.8 1.3L9.4 9.7" stroke="#f4f4f4" stroke-width="1.4" stroke-linecap="round"/><circle cx=".9" cy="1.4" r=".95" fill="#f4f4f4"/><path d="M10.3 10.6L16 15.1" stroke="#dc9c00" stroke-width="3.2" stroke-linecap="round"/><path d="M10.3 10.6L16 15.1" stroke="#fcd80c" stroke-width="2.1" stroke-linecap="round"/><path d="M11.2 11.3L15.6 14.8" stroke="#eeb400" stroke-width="2.1" stroke-dasharray=".5 1.1"/></svg></div>
<div class="a" style="left:44px;top:314.5px;width:18px;height:18px"><svg width="18" height="18" viewBox="0 0 18 18"><path d="M8.4 9.2L1.7 15.7" stroke="#b9b9b9" stroke-width="2.7" stroke-linecap="round"/><path d="M12.2 5.2L8 9.5" stroke="#e4e4e4" stroke-width="2.8"/><path d="M7.8 9.9L2.1 15.4" stroke="#35383a" stroke-width="1.2" stroke-linecap="round"/><circle cx="1.9" cy="15.6" r=".55" fill="#35383a"/><circle cx="13.8" cy="3.3" r="2.95" fill="#efefef"/><path d="M14.5 3.1L18 3L16 -.7z" fill="#3c3f41"/><path d="M14.3 3.2l1.6-1.2" stroke="#2c2e30" stroke-width="1.1" stroke-linecap="round"/><path d="M.8 1.3L9.4 9.7" stroke="#f4f4f4" stroke-width="1.4" stroke-linecap="round"/><circle cx=".9" cy="1.4" r=".95" fill="#f4f4f4"/><path d="M10.3 10.6L16 15.1" stroke="#dc9c00" stroke-width="3.2" stroke-linecap="round"/><path d="M10.3 10.6L16 15.1" stroke="#fcd80c" stroke-width="2.1" stroke-linecap="round"/><path d="M11.2 11.3L15.6 14.8" stroke="#eeb400" stroke-width="2.1" stroke-dasharray=".5 1.1"/></svg></div>
<svg class="a" style="left:32px;top:338px" width="8" height="10" viewBox="0 0 8 10"><path d="M0 .3V9.7L8 5z" fill="#9d9d9d"/></svg>
<div class="a" style="left:44px;top:333.5px;width:18px;height:18px"><svg width="18" height="18" viewBox="0 0 18 18"><ellipse cx="4" cy="17.3" rx="5" ry=".7" fill="#222" opacity=".35"/><path d="M-0.70 16.50L0.48 15.42" stroke="#d0d0d0" stroke-width="0.90" stroke-linecap="round"/><path d="M0.48 15.42L10.04 6.72" stroke="#e9e9e9" stroke-width="2.70"/><path d="M0.48 15.42L10.04 6.72" stroke="#808488" stroke-width="1.00" stroke-dasharray="1.1 .7"/><path d="M10.40 6.39L15.57 1.68" stroke="#56a448" stroke-width="4.20" stroke-linecap="round"/><path d="M10.24 5.32L14.97 1.02" stroke="#9adc8c" stroke-width="1.90" stroke-linecap="round"/><path d="M10.40 6.39L11.36 5.52" stroke="#4a9640" stroke-width="5.00"/></svg></div>
<svg class="a" style="left:32px;top:357px" width="8" height="10" viewBox="0 0 8 10"><path d="M0 .3V9.7L8 5z" fill="#9d9d9d"/></svg>
<div class="a" style="left:44px;top:352.5px;width:18px;height:18px"><svg width="18" height="18" viewBox="0 0 18 18"><rect x="-.5" y=".4" width="18.4" height="16.2" fill="#ffffff"/><rect x="-.5" y=".4" width="18.4" height="4.6" fill="#c6c6c6"/><rect x="-.5" y=".4" width="18.4" height="1" fill="#e4e4e4"/><path d="M11.5 2.8h5" stroke="#b4b4b4" stroke-width="1" stroke-dasharray="1 1"/><path d="M2.2 5.4V13.3M2.2 8.8H4.2M2.2 13.3H4.2" stroke="#8c8c8c" stroke-width=".8" fill="none"/><circle cx="6" cy="8.8" r="1.9" fill="url(#gNode)"/><circle cx="6" cy="13.3" r="1.9" fill="url(#gNode)"/><ellipse cx="6" cy="7.7" rx="1.3" ry=".7" fill="#d6eaff" opacity=".85"/><ellipse cx="6" cy="12.2" rx="1.3" ry=".7" fill="#d6eaff" opacity=".85"/></svg></div>
<svg class="a" style="left:32px;top:376px" width="8" height="10" viewBox="0 0 8 10"><path d="M0 .3V9.7L8 5z" fill="#9d9d9d"/></svg>
<div class="a" style="left:44px;top:371.5px;width:18px;height:18px"><svg width="18" height="18" viewBox="0 0 18 18"><rect x="-.5" y=".4" width="18.4" height="16.2" fill="#ffffff"/><rect x="-.5" y=".4" width="18.4" height="4.6" fill="#c6c6c6"/><rect x="-.5" y=".4" width="18.4" height="1" fill="#e4e4e4"/><path d="M11.5 2.8h5" stroke="#b4b4b4" stroke-width="1" stroke-dasharray="1 1"/><path d="M2.2 5.4V13.3M2.2 8.8H4.2M2.2 13.3H4.2" stroke="#8c8c8c" stroke-width=".8" fill="none"/><circle cx="6" cy="8.8" r="1.9" fill="url(#gNode)"/><circle cx="6" cy="13.3" r="1.9" fill="url(#gNode)"/><ellipse cx="6" cy="7.7" rx="1.3" ry=".7" fill="#d6eaff" opacity=".85"/><ellipse cx="6" cy="12.2" rx="1.3" ry=".7" fill="#d6eaff" opacity=".85"/></svg></div>
<svg class="a" style="left:32px;top:395px" width="8" height="10" viewBox="0 0 8 10"><path d="M0 .3V9.7L8 5z" fill="#9d9d9d"/></svg>
<div class="a" style="left:44px;top:390.5px;width:18px;height:18px"><svg width="18" height="18" viewBox="0 0 18 18"><rect x="-.5" y=".4" width="18.4" height="16.2" fill="#ffffff"/><rect x="-.5" y=".4" width="18.4" height="4.6" fill="#c6c6c6"/><rect x="-.5" y=".4" width="18.4" height="1" fill="#e4e4e4"/><path d="M11.5 2.8h5" stroke="#b4b4b4" stroke-width="1" stroke-dasharray="1 1"/><path d="M2.2 5.4V13.3M2.2 8.8H4.2M2.2 13.3H4.2" stroke="#8c8c8c" stroke-width=".8" fill="none"/><circle cx="6" cy="8.8" r="1.9" fill="url(#gNode)"/><circle cx="6" cy="13.3" r="1.9" fill="url(#gNode)"/><ellipse cx="6" cy="7.7" rx="1.3" ry=".7" fill="#d6eaff" opacity=".85"/><ellipse cx="6" cy="12.2" rx="1.3" ry=".7" fill="#d6eaff" opacity=".85"/></svg></div>
<svg class="a" style="left:32px;top:414px" width="8" height="10" viewBox="0 0 8 10"><path d="M0 .3V9.7L8 5z" fill="#9d9d9d"/></svg>
<div class="a" style="left:44px;top:409.5px;width:18px;height:18px"><svg width="18" height="18" viewBox="0 0 18 18"><rect x="-.5" y=".4" width="18.4" height="16.2" fill="#ffffff"/><rect x="-.5" y=".4" width="18.4" height="4.6" fill="#c6c6c6"/><rect x="-.5" y=".4" width="18.4" height="1" fill="#e4e4e4"/><path d="M11.5 2.8h5" stroke="#b4b4b4" stroke-width="1" stroke-dasharray="1 1"/><path d="M2.2 5.4V13.3M2.2 8.8H4.2M2.2 13.3H4.2" stroke="#8c8c8c" stroke-width=".8" fill="none"/><circle cx="6" cy="8.8" r="1.9" fill="url(#gNode)"/><circle cx="6" cy="13.3" r="1.9" fill="url(#gNode)"/><ellipse cx="6" cy="7.7" rx="1.3" ry=".7" fill="#d6eaff" opacity=".85"/><ellipse cx="6" cy="12.2" rx="1.3" ry=".7" fill="#d6eaff" opacity=".85"/></svg></div>
<svg class="a" style="left:32px;top:433px" width="8" height="10" viewBox="0 0 8 10"><path d="M0 .3V9.7L8 5z" fill="#9d9d9d"/></svg>
<div class="a" style="left:44px;top:428.5px;width:18px;height:18px"><svg width="18" height="18" viewBox="0 0 18 18"><rect x="-.5" y=".4" width="18.4" height="16.2" fill="#ffffff"/><rect x="-.5" y=".4" width="18.4" height="4.6" fill="#c6c6c6"/><rect x="-.5" y=".4" width="18.4" height="1" fill="#e4e4e4"/><path d="M11.5 2.8h5" stroke="#b4b4b4" stroke-width="1" stroke-dasharray="1 1"/><path d="M2.2 5.4V13.3M2.2 8.8H4.2M2.2 13.3H4.2" stroke="#8c8c8c" stroke-width=".8" fill="none"/><circle cx="6" cy="8.8" r="1.9" fill="url(#gNode)"/><circle cx="6" cy="13.3" r="1.9" fill="url(#gNode)"/><ellipse cx="6" cy="7.7" rx="1.3" ry=".7" fill="#d6eaff" opacity=".85"/><ellipse cx="6" cy="12.2" rx="1.3" ry=".7" fill="#d6eaff" opacity=".85"/></svg></div>
<svg class="a" style="left:32px;top:452px" width="8" height="10" viewBox="0 0 8 10"><path d="M0 .3V9.7L8 5z" fill="#9d9d9d"/></svg>
<div class="a" style="left:44px;top:447.5px;width:18px;height:18px"><svg width="18" height="18" viewBox="0 0 18 18"><rect x="-.5" y=".4" width="18.4" height="16.2" fill="#ffffff"/><rect x="-.5" y=".4" width="18.4" height="4.6" fill="#c6c6c6"/><rect x="-.5" y=".4" width="18.4" height="1" fill="#e4e4e4"/><path d="M11.5 2.8h5" stroke="#b4b4b4" stroke-width="1" stroke-dasharray="1 1"/><path d="M2.2 5.4V13.3M2.2 8.8H4.2M2.2 13.3H4.2" stroke="#8c8c8c" stroke-width=".8" fill="none"/><circle cx="6" cy="8.8" r="1.9" fill="url(#gNode)"/><circle cx="6" cy="13.3" r="1.9" fill="url(#gNode)"/><ellipse cx="6" cy="7.7" rx="1.3" ry=".7" fill="#d6eaff" opacity=".85"/><ellipse cx="6" cy="12.2" rx="1.3" ry=".7" fill="#d6eaff" opacity=".85"/></svg></div>
<svg class="a" style="left:31px;top:472px" width="9" height="8" viewBox="0 0 9 8"><path d="M0 0H9L4.5 8z" fill="#9d9d9d"/></svg>
<div class="a" style="left:44px;top:466.5px;width:18px;height:18px"><svg width="18" height="18" viewBox="0 0 18 18"><rect x="-.5" y=".4" width="18.4" height="16.2" fill="#ffffff"/><rect x="-.5" y=".4" width="18.4" height="4.6" fill="#c6c6c6"/><rect x="-.5" y=".4" width="18.4" height="1" fill="#e4e4e4"/><path d="M11.5 2.8h5" stroke="#b4b4b4" stroke-width="1" stroke-dasharray="1 1"/><path d="M2.2 5.4V13.3M2.2 8.8H4.2M2.2 13.3H4.2" stroke="#8c8c8c" stroke-width=".8" fill="none"/><circle cx="6" cy="8.8" r="1.9" fill="url(#gNode)"/><circle cx="6" cy="13.3" r="1.9" fill="url(#gNode)"/><ellipse cx="6" cy="7.7" rx="1.3" ry=".7" fill="#d6eaff" opacity=".85"/><ellipse cx="6" cy="12.2" rx="1.3" ry=".7" fill="#d6eaff" opacity=".85"/></svg></div>
<svg class="a" style="left:39px;top:491px" width="9" height="8" viewBox="0 0 9 8"><path d="M0 0H9L4.5 8z" fill="#9d9d9d"/></svg>
<div class="a" style="left:52px;top:485.5px;width:18px;height:18px"><svg width="18" height="18" viewBox="0 0 18 18"><rect x="-.5" y=".4" width="18.4" height="16.2" fill="#ffffff"/><rect x="-.5" y=".4" width="18.4" height="4.6" fill="#c6c6c6"/><rect x="-.5" y=".4" width="18.4" height="1" fill="#e4e4e4"/><path d="M11.5 2.8h5" stroke="#b4b4b4" stroke-width="1" stroke-dasharray="1 1"/><path d="M2.2 5.4V13.3M2.2 8.8H4.2M2.2 13.3H4.2" stroke="#8c8c8c" stroke-width=".8" fill="none"/><circle cx="6" cy="8.8" r="1.9" fill="url(#gNode)"/><circle cx="6" cy="13.3" r="1.9" fill="url(#gNode)"/><ellipse cx="6" cy="7.7" rx="1.3" ry=".7" fill="#d6eaff" opacity=".85"/><ellipse cx="6" cy="12.2" rx="1.3" ry=".7" fill="#d6eaff" opacity=".85"/></svg></div>
<svg class="a" style="left:47px;top:510px" width="9" height="8" viewBox="0 0 9 8"><path d="M0 0H9L4.5 8z" fill="#9d9d9d"/></svg>
<div class="a" style="left:60px;top:504.5px;width:18px;height:18px"><svg width="18" height="18" viewBox="0 0 18 18"><ellipse cx="4" cy="17.3" rx="5" ry=".7" fill="#222" opacity=".35"/><path d="M-0.70 16.50L0.48 15.42" stroke="#d0d0d0" stroke-width="0.90" stroke-linecap="round"/><path d="M0.48 15.42L10.04 6.72" stroke="#e9e9e9" stroke-width="2.70"/><path d="M0.48 15.42L10.04 6.72" stroke="#808488" stroke-width="1.00" stroke-dasharray="1.1 .7"/><path d="M10.40 6.39L15.57 1.68" stroke="#56a448" stroke-width="4.20" stroke-linecap="round"/><path d="M10.24 5.32L14.97 1.02" stroke="#9adc8c" stroke-width="1.90" stroke-linecap="round"/><path d="M10.40 6.39L11.36 5.52" stroke="#4a9640" stroke-width="5.00"/></svg></div>
<div class="a" style="left:3px;top:523px;width:379px;height:19px;background:#2f65ca"></div>
<div class="a" style="left:89px;top:523px;width:44px;height:19px;box-sizing:border-box;border:1px solid #0d4be0"></div>
<div class="a" style="left:68px;top:523.5px;width:18px;height:18px"><svg width="18" height="18" viewBox="0 0 18 18"><path d="M-.4 .5H14.3V10.4L9.4 16.6H-.4z" fill="url(#gPage)"/><path d="M14.3 10.4L9.4 16.6L9.9 11.2z" fill="#bdbdbd"/><path d="M9.9 11.2L14.3 10.4" stroke="#e8e8e8" stroke-width=".6"/><rect x="7.4" y="5.5" width="9" height="2.2" fill="url(#gTail)"/><path d="M12.3 2.4L16.9 6.6L12.3 10.8" fill="none" stroke="#1c72ea" stroke-width="2.3" stroke-linejoin="miter"/></svg></div>
<div class="a" style="left:68px;top:542.5px;width:18px;height:18px"><svg width="18" height="18" viewBox="0 0 18 18"><path d="M-.4 .5H14.3V10.4L9.4 16.6H-.4z" fill="url(#gPage)"/><path d="M14.3 10.4L9.4 16.6L9.9 11.2z" fill="#bdbdbd"/><path d="M9.9 11.2L14.3 10.4" stroke="#e8e8e8" stroke-width=".6"/><rect x="7.4" y="5.5" width="9" height="2.2" fill="url(#gTail)"/><path d="M12.3 2.4L16.9 6.6L12.3 10.8" fill="none" stroke="#1c72ea" stroke-width="2.3" stroke-linejoin="miter"/></svg></div>
<div class="a" style="left:68px;top:561.5px;width:18px;height:18px"><svg width="18" height="18" viewBox="0 0 18 18"><path d="M1 .3H15.7V12L11.3 17.5H1z" fill="url(#gPage)"/><path d="M15.7 12L11.3 17.5L11.6 12.8z" fill="#c4c4c4"/><path d="M8.2 8.4L16.9 16.2" stroke="#55595c" stroke-width="2.6" stroke-linecap="round"/><path d="M8.2 8.4L16.9 16.2" stroke="#e2e2e2" stroke-width="1.5" stroke-linecap="round"/><circle cx="4.8" cy="5" r="4.3" fill="url(#gLens)" stroke="#2c4c9c" stroke-width="1"/><path d="M2.4 4.2A2.8 2.8 0 0 1 5.4 2.2" stroke="#fff" stroke-width=".8" fill="none" opacity=".9"/></svg></div>
<svg class="a" style="left:48px;top:585px" width="8" height="10" viewBox="0 0 8 10"><path d="M0 .3V9.7L8 5z" fill="#9d9d9d"/></svg>
<div class="a" style="left:60px;top:580.5px;width:18px;height:18px"><svg width="18" height="18" viewBox="0 0 18 18"><ellipse cx="4" cy="17.3" rx="5" ry=".7" fill="#222" opacity=".35"/><path d="M-0.70 16.50L0.48 15.42" stroke="#d0d0d0" stroke-width="0.90" stroke-linecap="round"/><path d="M0.48 15.42L10.04 6.72" stroke="#e9e9e9" stroke-width="2.70"/><path d="M0.48 15.42L10.04 6.72" stroke="#808488" stroke-width="1.00" stroke-dasharray="1.1 .7"/><path d="M10.40 6.39L15.57 1.68" stroke="#56a448" stroke-width="4.20" stroke-linecap="round"/><path d="M10.24 5.32L14.97 1.02" stroke="#9adc8c" stroke-width="1.90" stroke-linecap="round"/><path d="M10.40 6.39L11.36 5.52" stroke="#4a9640" stroke-width="5.00"/></svg></div>
<svg class="a" style="left:32px;top:604px" width="8" height="10" viewBox="0 0 8 10"><path d="M0 .3V9.7L8 5z" fill="#9d9d9d"/></svg>
<div class="a" style="left:44px;top:599.5px;width:18px;height:18px"><svg width="18" height="18" viewBox="0 0 18 18"><ellipse cx="4" cy="17.3" rx="5" ry=".7" fill="#222" opacity=".35"/><path d="M-0.70 16.50L0.48 15.42" stroke="#d0d0d0" stroke-width="0.90" stroke-linecap="round"/><path d="M0.48 15.42L10.04 6.72" stroke="#e9e9e9" stroke-width="2.70"/><path d="M0.48 15.42L10.04 6.72" stroke="#808488" stroke-width="1.00" stroke-dasharray="1.1 .7"/><path d="M10.40 6.39L15.57 1.68" stroke="#56a448" stroke-width="4.20" stroke-linecap="round"/><path d="M10.24 5.32L14.97 1.02" stroke="#9adc8c" stroke-width="1.90" stroke-linecap="round"/><path d="M10.40 6.39L11.36 5.52" stroke="#4a9640" stroke-width="5.00"/></svg></div>
<div class="a" style="left:28px;top:618.5px;width:18px;height:18px"><svg width="18" height="18" viewBox="0 0 18 18"><path d="M.8 1.2V17.2" stroke="#8c8c8c" stroke-width=".8" stroke-dasharray="1 1"/><path d="M.4 17.2H16.2" stroke="#9a9a9a" stroke-width=".8"/><path d="M8.6 12.5L10.2 8Q11.8 5.4 14.8 5.4V14H8.6z" fill="url(#gSky)"/><path d="M2.3 16.8V13.6L6.9 9.7L10.8 14.2L14.8 12.4V16.8z" fill="url(#gPink)"/><path d="M2.3 13.6L6.9 9.7L10.8 14.2L14.8 12.4" fill="none" stroke="#e050b8" stroke-width=".7"/></svg></div>
<svg class="a" style="left:385px;top:445px" width="6" height="16" viewBox="0 0 6 16"><g stroke="#e4e4e4" stroke-width="1.05" stroke-dasharray="1 1"><path d="M3.2 0l2 2M1 1l4 4M1 4l4 4M1 7l4 4M1 10l4 4M1 13l2 2"/></g></svg>
<div class="f" style="left:483px;top:85px;width:1040px"></div>
<div class="f" style="left:483px;top:116px;width:1040px"></div>
<div class="gb" style="left:405px;top:146px;width:1115px;height:39px"></div>
<div class="gl" style="left:409px;top:140px;width:63px"></div>
<div class="gb" style="left:405px;top:195px;width:1115px;height:49px"></div>
<div class="gl" style="left:409px;top:189px;width:93px"></div>
<div class="rb" style="left:415.9px;top:162.9px"></div>
<div class="rb on" style="left:648.0px;top:162.9px"></div>
<div class="rb" style="left:796.8px;top:162.9px"></div>
<div class="rb" style="left:950.1px;top:162.9px"></div>
<div class="f" style="left:1159px;top:158px;width:358px;height:24px"></div>
<div class="rb on" style="left:453.1px;top:217.0px"></div>
<div class="rb" style="left:522.7px;top:217.0px"></div>
<div class="rb" style="left:670.5px;top:217.0px"></div>
<div class="rb" style="left:838.0px;top:217.0px"></div>
<div class="rb" style="left:991.8px;top:217.0px"></div>
<div class="rb" style="left:1135.7px;top:217.0px"></div>
<div class="rb" style="left:1198.5px;top:217.0px"></div>
<div class="rb" style="left:1333.8px;top:217.0px"></div>
<div class="f" style="left:791px;top:248px;width:732px"></div>
<div class="f" style="left:791px;top:272px;width:732px"></div>
<div class="f" style="left:791px;top:296px;width:732px"></div>
<div class="f" style="left:791px;top:320px;width:732px"></div>
<div class="f" style="left:791px;top:344px;width:253px"></div>
<div class="a" style="left:1047.5px;top:348.5px;width:14px;height:13px;box-sizing:border-box;border-radius:3px;background:linear-gradient(#686c6e,#575b5d);border:1px solid #2f3234;box-shadow:0 1px 0 rgba(130,130,130,.25)"></div>
<div id="txt" style="position:absolute;left:0;top:0;width:1533px;height:837px;will-change:transform">
<span class="t " id="time" style="left:1325.00px;top:15.33px;transform:scaleX(0.9372)">00:00:00</span>
<span class="t " id="warn0" style="left:1428.00px;top:15.33px;transform:scaleX(0.9783)">0</span>
<span class="t " id="thr" style="left:1454.00px;top:15.33px;transform:scaleX(1.1472)">0/0</span>
<span class="t tr " id="tr0" style="left:42.00px;top:49.67px;transform:scaleX(0.9797)">Test Plan</span>
<span class="t tr " id="tr1" style="left:50.00px;top:68.67px;transform:scaleX(0.9369)">Global Variables</span>
<span class="t tr " id="tr2" style="left:50.00px;top:87.67px;transform:scaleX(0.9369)">HTTP Request Defaults</span>
<span class="t tr " id="tr3" style="left:50.00px;top:106.67px;transform:scaleX(0.9398)">HTTP Cookie Manager</span>
<span class="t tr " id="tr4" style="left:50.00px;top:125.67px;transform:scaleX(0.9471)">HTTP Header Manager</span>
<span class="t tr dis" id="tr5" style="left:50.00px;top:144.67px;transform:scaleX(0.9254)">Aggregate Report</span>
<span class="t tr " id="tr6" style="left:50.00px;top:163.67px;transform:scaleX(0.9429)">setUp Thread Group</span>
<span class="t tr " id="tr7" style="left:50.00px;top:182.67px;transform:scaleX(0.8922)">Agents</span>
<span class="t tr " id="tr8" style="left:58.00px;top:201.67px;transform:scaleX(0.9147)">users</span>
<span class="t tr " id="tr9" style="left:58.00px;top:220.67px;transform:scaleX(0.9324)">load profile</span>
<span class="t tr " id="tr10" style="left:58.00px;top:239.67px;transform:scaleX(0.9217)">jmeter_agent_login_and_view_dashboard</span>
<span class="t tr " id="tr11" style="left:58.00px;top:258.67px;transform:scaleX(0.9186)">actions per login</span>
<span class="t tr " id="tr12" style="left:66.00px;top:277.67px;transform:scaleX(0.9395)">s_projects</span>
<span class="t tr " id="tr13" style="left:66.00px;top:296.67px;transform:scaleX(0.9331)">m_projects</span>
<span class="t tr " id="tr14" style="left:66.00px;top:315.67px;transform:scaleX(0.9211)">requests</span>
<span class="t tr " id="tr15" style="left:66.00px;top:334.67px;transform:scaleX(0.9512)">pacing - start</span>
<span class="t tr " id="tr16" style="left:66.00px;top:353.67px;transform:scaleX(0.9179)">small project actions</span>
<span class="t tr " id="tr17" style="left:66.00px;top:372.67px;transform:scaleX(0.9196)">medium project actions</span>
<span class="t tr " id="tr18" style="left:66.00px;top:391.67px;transform:scaleX(0.9278)">agent_browse_projects</span>
<span class="t tr " id="tr19" style="left:66.00px;top:410.67px;transform:scaleX(0.9062)">agent_view_request</span>
<span class="t tr " id="tr20" style="left:66.00px;top:429.67px;transform:scaleX(0.9147)">agent_add_comment</span>
<span class="t tr " id="tr21" style="left:66.00px;top:448.67px;transform:scaleX(0.8968)">agent_view_customers</span>
<span class="t tr " id="tr22" style="left:66.00px;top:467.67px;transform:scaleX(0.9101)">agent_standalone_extension</span>
<span class="t tr " id="tr23" style="left:74.00px;top:486.67px;transform:scaleX(0.9287)">jmeter_app_specific_action</span>
<span class="t tr " id="tr24" style="left:82.00px;top:505.67px;transform:scaleX(0.9697)">GET /app/get_endpoing</span>
<span class="t tr sel" id="tr25" style="left:90.00px;top:524.67px;transform:scaleX(0.9646)">app_id</span>
<span class="t tr " id="tr26" style="left:90.00px;top:543.67px;transform:scaleX(0.9503)">app_token</span>
<span class="t tr " id="tr27" style="left:90.00px;top:562.67px;transform:scaleX(0.9288)">assertion after GET request</span>
<span class="t tr " id="tr28" style="left:82.00px;top:581.67px;transform:scaleX(0.9662)">POST /app/post_endpoing</span>
<span class="t tr " id="tr29" style="left:66.00px;top:600.67px;transform:scaleX(0.9662)">pacing - end</span>
<span class="t tr dis" id="tr30" style="left:50.00px;top:619.67px;transform:scaleX(0.9416)">View Results Tree</span>
<span class="t h" id="title" style="left:402.00px;top:57.22px;transform:scaleX(0.9781)">Regular Expression Extractor</span>
<span class="t " id="lname" style="left:402.00px;top:88.33px;transform:scaleX(0.9336)">Name:</span>
<span class="t " id="lcomm" style="left:403.00px;top:119.33px;transform:scaleX(0.9391)">Comments:</span>
<span class="t " id="vname" style="left:489.00px;top:88.33px;transform:scaleX(0.9554)">app_id</span>
<span class="t " id="gapply" style="left:413.00px;top:139.93px;transform:scaleX(0.9442)">Apply to:</span>
<span class="t " id="gfield" style="left:412.00px;top:188.33px;transform:scaleX(0.9404)">Field to check</span>
<span class="t " id="r1" style="left:438.00px;top:162.33px;transform:scaleX(0.9399)">Main sample and sub-samples</span>
<span class="t " id="r2" style="left:670.00px;top:162.33px;transform:scaleX(0.9290)">Main sample only</span>
<span class="t " id="r3" style="left:819.00px;top:162.33px;transform:scaleX(0.9565)">Sub-samples only</span>
<span class="t " id="r4" style="left:974.00px;top:162.33px;transform:scaleX(0.9040)">JMeter Variable Name to use</span>
<span class="t " id="c1" style="left:476.00px;top:216.33px;transform:scaleX(0.8740)">Body</span>
<span class="t " id="c2" style="left:545.00px;top:216.33px;transform:scaleX(0.8983)">Body (unescaped)</span>
<span class="t " id="c3" style="left:693.00px;top:216.33px;transform:scaleX(0.9080)">Body as a Document</span>
<span class="t " id="c4" style="left:860.00px;top:216.33px;transform:scaleX(0.9164)">Response Headers</span>
<span class="t " id="c5" style="left:1014.00px;top:216.33px;transform:scaleX(0.9041)">Request Headers</span>
<span class="t " id="c6" style="left:1158.00px;top:216.33px;transform:scaleX(0.8827)">URL</span>
<span class="t " id="c7" style="left:1220.00px;top:216.33px;transform:scaleX(0.9367)">Response Code</span>
<span class="t " id="c8" style="left:1356.00px;top:216.33px;transform:scaleX(0.9206)">Response Message</span>
<span class="t " id="fl0" style="left:403.00px;top:247.33px;transform:scaleX(0.9128)">Name of created variable:</span>
<span class="t " id="fv0" style="left:797.00px;top:251.33px;transform:scaleX(0.9554)">app_id</span>
<span class="t " id="fl1" style="left:402.00px;top:271.33px;transform:scaleX(0.9396)">Regular Expression:</span>
<span class="t " id="fv1" style="left:797.00px;top:275.33px;transform:scaleX(0.8539)">"id":"(.+?)"</span>
<span class="t " id="fl2" style="left:403.00px;top:295.33px;transform:scaleX(0.9285)">Template ($i$ where i is capturing group number, starts at 1):</span>
<span class="t " id="fv2" style="left:797.00px;top:299.33px;transform:scaleX(0.9490)">$1$</span>
<span class="t " id="fl3" style="left:402.00px;top:319.33px;transform:scaleX(0.9326)">Match No. (0 for Random):</span>
<span class="t " id="fv3" style="left:797.00px;top:323.33px;transform:scaleX(0.9594)">1</span>
<span class="t " id="fl4" style="left:402.00px;top:343.33px;transform:scaleX(0.9453)">Default Value:</span>
<span class="t " id="fv4" style="left:797.00px;top:347.33px;transform:scaleX(0.9500)">NOT FOUND</span>
<span class="t " id="cbl" style="left:1068.00px;top:347.33px;transform:scaleX(0.9123)">Use empty default value</span>
</div>
</body></html>
